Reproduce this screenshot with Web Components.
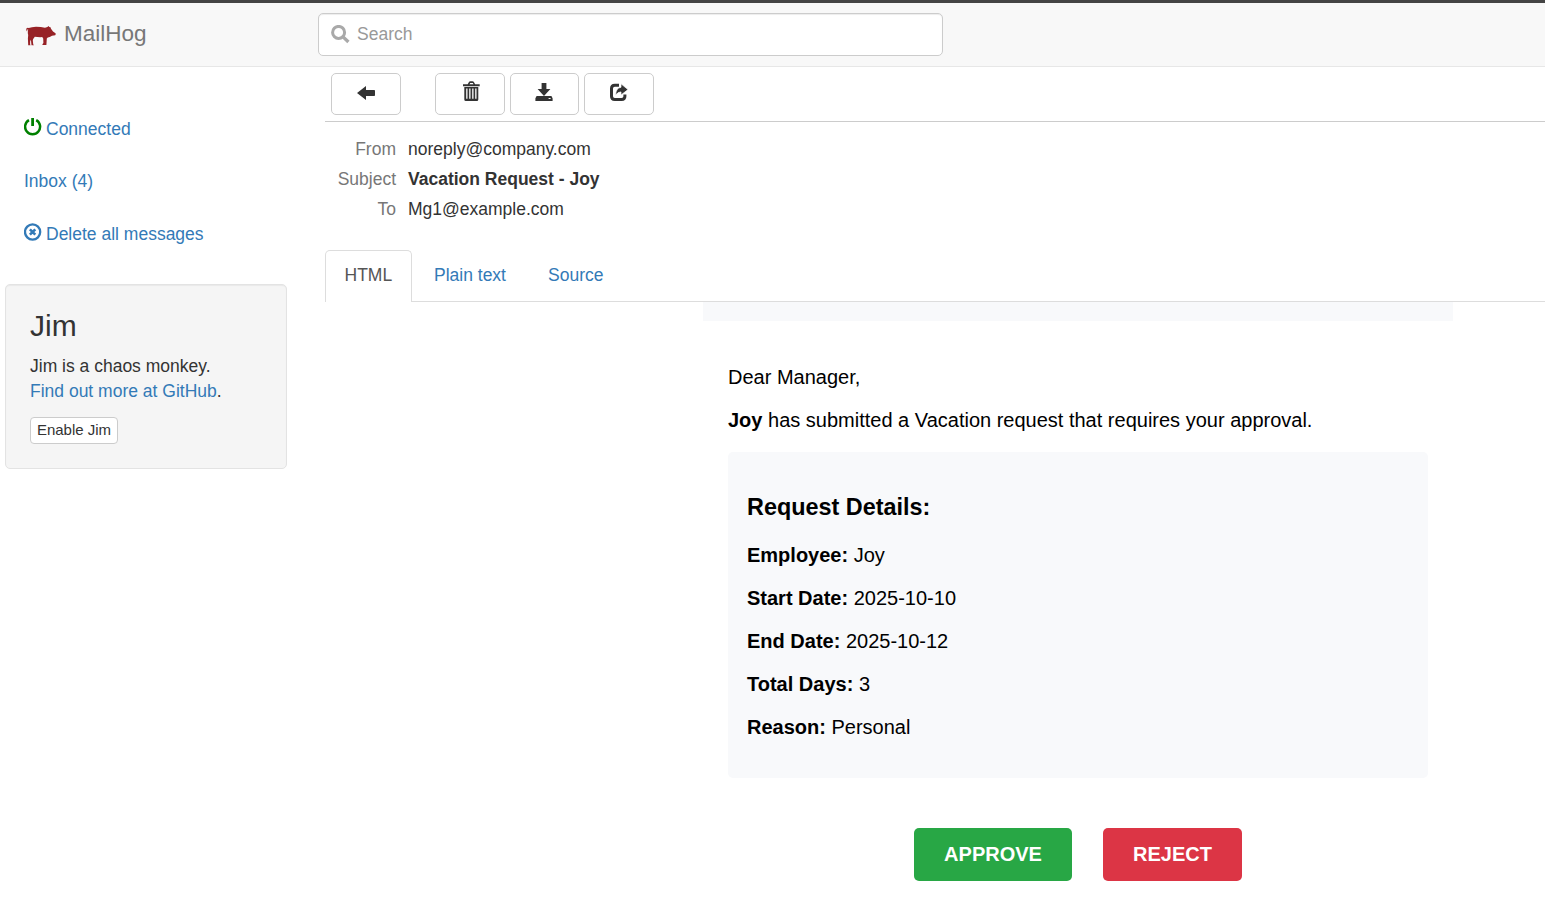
<!DOCTYPE html>
<html lang="en">
<head>
<meta charset="utf-8">
<title>MailHog</title>
<style>
html,body{margin:0;height:100%;background:#fff;overflow:hidden}
body{font:17.5px/25px "Liberation Sans",Arial,sans-serif;color:#333}
</style>
</head>
<body>
<mail-app></mail-app>
<script>
const define = (name, html) => {
  const tpl = document.createElement('template');
  tpl.innerHTML = html;
  customElements.define(name, class extends HTMLElement {
    constructor() {
      super();
      this.attachShadow({mode: 'open'}).append(tpl.content.cloneNode(true));
    }
  });
};

const ICONS = {
  off: [18, 18, '<path d="M5 2.100A7.500 7.500 0 1 0 12.200 2.100" fill="none" stroke="currentColor" stroke-width="2.500"/><path d="M7.200 0h2.800v8H7.200z"/>'],
  removeCircle: [18, 18, '<circle cx="8.600" cy="9" r="7.600" fill="none" stroke="currentColor" stroke-width="2.300"/><path d="M5.900 6.300l5.400 5.400M11.300 6.300l-5.400 5.400" stroke="currentColor" stroke-width="2.600"/>'],
  search: [19, 19, '<circle cx="7.600" cy="7.400" r="6" fill="none" stroke="currentColor" stroke-width="3"/><path d="M11.800 11.600L17.400 17" stroke="currentColor" stroke-width="3.300"/>'],
  back: [18, 14, '<path d="M0 7L9 0v4h8.200q.8 0 .8.800v4.400q0 .8-.8.800H9v4z"/>'],
  trash: [17, 20, '<path d="M0 3.200h4.700L5.800 1.200Q6.300.2 7.300.2h2.200q1 0 1.500 1l1.100 2h4.600v2H0zM6.500 3.200h4L9.800 1.900H7.200z" fill-rule="evenodd"/><path d="M1.300 6h14v12.400q0 1.500-1.500 1.500h-11q-1.500 0-1.500-1.500zM3.200 7.600v10.200h1.300V7.600zM6.200 7.600v10.200h1.300V7.600zM9.200 7.600v10.200h1.300V7.600zM12.200 7.600v10.200h1.300V7.600z" fill-rule="evenodd"/>'],
  download: [18, 18, '<path d="M6.600 0h4.800v6h4L9 13 2.600 6h4z"/><path d="M1.600 12.900h14.800l1.200 2.300v2.700H.4v-2.700zM13.600 14.900v1.200h2v-1.200z" fill-rule="evenodd"/>'],
  share: [18, 18, '<path d="M9 2.200H4.800Q1.500 2.200 1.500 5.500v7.700q0 3.300 3.300 3.300h6.800q3.300 0 3.300-3.300v-1.700" fill="none" stroke="currentColor" stroke-width="3"/><path d="M11 .8L18 6.600 11 12V8.900Q7.800 8.800 5.600 12.200 5.900 4.800 11 4.300z" stroke="#fff" stroke-width=".7"/>']
};
customElements.define('glyph-icon', class extends HTMLElement {
  connectedCallback() {
    if (this.shadowRoot) return;
    const [w, h, art] = ICONS[this.getAttribute('name')];
    this.attachShadow({mode: 'open'}).innerHTML =
      `<style>:host{display:block;flex:none;width:${w}px;height:${h}px}svg{display:block}</style>
       <svg width="${w}" height="${h}" viewBox="0 0 ${w} ${h}" fill="currentColor">${art}</svg>`;
  }
});

define('hog-logo', `<style>:host{display:block;width:31px;height:21px}svg{display:block}</style>
<svg width="31" height="21" viewBox="0 0 31 21" fill="#972226"><path d="M1 6.500Q-.2 4.600.6 3.300 1.600 2.300 2.800 3.100 5.500 2 10 1.800q5 0 9 1l2.400-.9L22.500.9l.8 1.200 1.200.2.500 1.500 2 2.700 2.500 1.700q.6 1.200-.3 2l-3.200.5q-2.400 1.500-4.200 1.900l-1 1-.4 6.400h-3.900l-.1-.8 1-1.100-.2-4.500-1-1.500q-4 .2-7.400-.4L7.200 14l-.4 1.200.4 4 .7 1.100H5.500L4.900 14.800l-.7 1.400-.1 3 .5 1.100H2.200L1.900 13.500 2.200 10Q1.400 7.500 2.200 4.600L1.500 4.200z"/></svg>`);

define('top-bar', `<style>
:host{display:flex;box-sizing:border-box;height:67px;background:#f8f8f8;border-top:3px solid #444;border-bottom:1px solid #e7e7e7}
.brand{display:flex;width:318px;box-sizing:border-box;padding:18px 0 0 26px;font-size:22.5px;color:#777;flex:none}
hog-logo{margin:4px 7px 0 0}
.search{display:flex;box-sizing:border-box;width:625px;height:43px;margin-top:10px;padding:8px 12px;border:1px solid #ccc;border-radius:5px;background:#fff;box-shadow:inset 0 1px 1px rgba(0,0,0,.075);color:#999}
glyph-icon{margin:3px 7px 0 0;color:#a9a9a9}
</style><div class="brand"><hog-logo></hog-logo><span>MailHog</span></div>
<div class="search"><glyph-icon name="search"></glyph-icon><span>Search</span></div>`);

define('nav-link', `<style>:host{display:flex;height:25px;color:#337ab7;gap:4px}::slotted(glyph-icon){margin-top:1px}</style><slot></slot>`);

define('jim-panel', `<style>
:host{display:block;box-sizing:border-box;width:282px;height:185px;padding:24px;border:1px solid #e3e3e3;border-radius:5px;background:#f5f5f5;box-shadow:inset 0 1px 1px rgba(0,0,0,.05)}
h3{margin:0 0 12px;font-size:30px;line-height:33px;font-weight:400}
a{color:#337ab7}
p{margin:0 0 13px}
button{display:block;box-sizing:border-box;width:88px;height:27px;padding:0 0 2px;border:1px solid #ccc;border-radius:4px;background:#fff;color:#333;font:15px/22px "Liberation Sans",Arial,sans-serif}
</style><h3>Jim</h3><p>Jim is a chaos monkey.<br><a>Find out more at GitHub</a>.</p><button>Enable Jim</button>`);

define('side-bar', `<style>
:host{display:block;width:325px;flex:none;padding-top:50px;box-sizing:border-box}
nav{display:grid;grid-template-rows:25px 25px 25px;row-gap:27px;padding-left:24px;margin-bottom:38px}
nav-link:last-child{padding-top:1px;margin-bottom:-1px}
jim-panel{margin-left:5px}
</style><nav>
<nav-link><glyph-icon name="off" style="color:green"></glyph-icon><span>Connected</span></nav-link>
<nav-link><span>Inbox (4)</span></nav-link>
<nav-link><glyph-icon name="removeCircle"></glyph-icon><span>Delete all messages</span></nav-link>
</nav><jim-panel></jim-panel>`);

define('tool-button', `<style>:host{display:flex;box-sizing:border-box;width:70px;height:42px;border:1px solid #ccc;border-radius:5px;align-items:flex-start;justify-content:center;background:#fff}</style><slot></slot>`);

define('tool-bar', `<style>
:host{display:flex;box-sizing:border-box;height:55px;padding:6px 0 0 6px;border-bottom:1px solid #ccc}
.first{margin-right:34px}
tool-button+tool-button{margin-right:5px}
.mid{width:69px}
</style>
<tool-button class="first"><glyph-icon name="back" style="margin-top:12px"></glyph-icon></tool-button>
<tool-button><glyph-icon name="trash" style="margin:7px 0 0 2px"></glyph-icon></tool-button>
<tool-button class="mid"><glyph-icon name="download" style="margin:9px 1px 0 0"></glyph-icon></tool-button>
<tool-button><glyph-icon name="share" style="margin-top:9px"></glyph-icon></tool-button>`);

define('mail-headers', `<style>
:host{display:grid;grid-template-columns:71px 1fr;grid-template-rows:25px 25px 25px;column-gap:12px;row-gap:5px;padding-top:15px;height:113px}
span{text-align:right;color:#777}
</style><span>From</span><div>noreply@company.com</div><span>Subject</span><b>Vacation Request - Joy</b><span>To</span><div>Mg1@example.com</div>`);

define('mail-tabs', `<style>
:host{display:flex;box-sizing:border-box;height:52px;border-bottom:1px solid #ddd;color:#337ab7}
div{box-sizing:border-box;height:52px;padding:13px 0 0}
.on{width:87px;padding:12px 0 0 18.500px;border:1px solid #ddd;border-bottom:0;border-radius:5px 5px 0 0;background:#fff;color:#555}
.plain{width:114px;margin-left:22px}
</style><div class="on">HTML</div><div class="plain">Plain text</div><div>Source</div>`);

define('request-details', `<style>
:host{display:block;box-sizing:border-box;height:326px;padding:40px 19px 0;border-radius:5px;background:#f8f9fb}
h3{margin:0 0 18px;font-size:23.4px;line-height:30px}
p{margin:0 0 13px;line-height:30px}
</style><h3>Request Details:</h3>
<p><b>Employee:</b> Joy</p><p><b>Start Date:</b> 2025-10-10</p><p><b>End Date:</b> 2025-10-12</p><p><b>Total Days:</b> 3</p><p><b>Reason:</b> Personal</p>`);

define('action-button', `<style>:host{display:block;height:53px;border-radius:5px;color:#fff;font-weight:700;line-height:52px;text-align:center}</style><slot></slot>`);

define('mail-body', `<style>
:host{display:block;width:750px;margin-left:378px;color:#000;font-size:20px}
.head{height:19px;background:#f8f9fb}
.content{padding:41px 25px 0}
p{margin:0 0 13px;line-height:30px}
p+p{margin-bottom:17px}
.actions{display:flex;justify-content:center;gap:31px;margin-top:50px}
.yes{width:158px;background:#28a745}.no{width:139px;background:#dc3545}
</style><div class="head"></div><div class="content">
<p>Dear Manager,</p><p><b>Joy</b> has submitted a Vacation request that requires your approval.</p>
<request-details></request-details>
<div class="actions"><action-button class="yes">APPROVE</action-button><action-button class="no">REJECT</action-button></div></div>`);

define('mail-app', `<style>
:host{display:block;height:908px;overflow:hidden}
.row{display:flex}main{flex:1;min-width:0}
</style><top-bar></top-bar><div class="row"><side-bar></side-bar><main>
<tool-bar></tool-bar><mail-headers></mail-headers><mail-tabs></mail-tabs><mail-body></mail-body></main></div>`);
</script>
</body>
</html>
